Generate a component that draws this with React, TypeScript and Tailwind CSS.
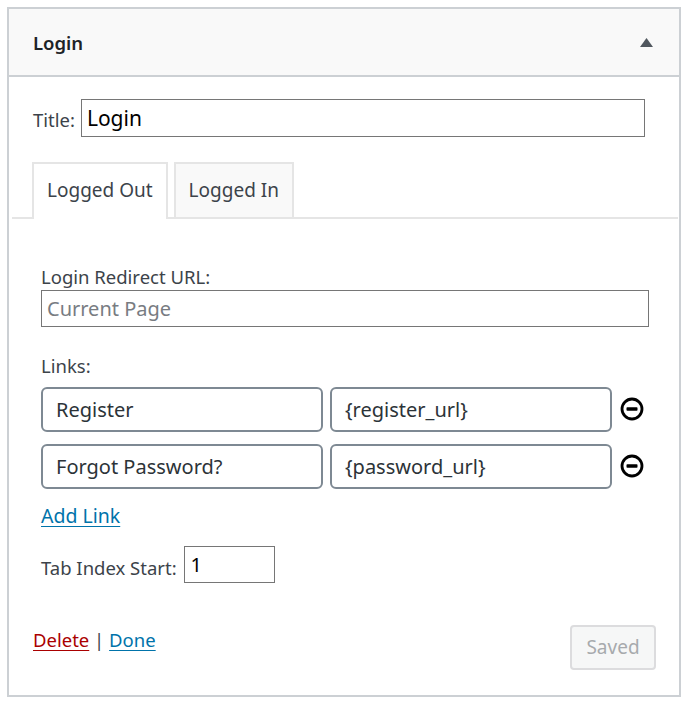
import React from "react";

function MinusCircle() {
  return (
    <svg width="24" height="24" viewBox="0 0 24 24" className="shrink-0">
      <circle cx="12" cy="12" r="10" fill="none" stroke="#000" strokeWidth="2.8" />
      <rect x="6.5" y="10.3" width="11" height="3.4" rx="0.8" fill="#000" />
    </svg>
  );
}

const linkInput =
  "h-[45px] w-[282px] rounded-[6px] border-2 border-[#7e8993] bg-white px-[13px] text-[20px] text-[#2c3338] outline-none";

export default function App() {
  const links = [
    { label: "Register", url: "{register_url}" },
    { label: "Forgot Password?", url: "{password_url}" },
  ];

  return (
    <div
      className="min-h-[705px] bg-white p-[7px] pb-[8px]"
      style={{ fontFamily: '"Noto Sans", "Open Sans", sans-serif' }}
    >
      <div className="flex h-[690px] w-[674px] flex-col border-2 border-[#ccd0d4] bg-white">
        {/* header */}
        <div className="flex h-[68px] items-center justify-between border-b-2 border-[#ccd0d4] bg-[#f9f9f9] pl-[24px] pr-[26px]">
          <h3 className="mt-[2px] text-[18.5px] font-semibold text-[#1d2327]">Login</h3>
          <svg width="13" height="9" viewBox="0 0 13 9">
            <polygon points="6.5,0 13,9 0,9" fill="#50575e" />
          </svg>
        </div>

        {/* title */}
        <div className="flex items-center pl-[24px] pr-[34px] pt-[22px]">
          <label className="mr-[6px] mt-[4px] text-[18.5px] text-[#3c434a]">Title:</label>
          <input
            readOnly
            value="Login"
            className="h-[38px] flex-1 border border-[#767676] px-[5px] text-[21px] text-black outline-none"
          />
        </div>

        {/* tabs */}
        <div className="ml-[3px] mr-[1px] mt-[25px] flex gap-[6px] border-b-2 border-[#e5e5e5] pl-[20px]">
          <div className="-mb-[2px] border-2 border-b-0 border-[#e5e5e5] bg-white px-[13px] pb-[14px] pt-[12px] text-[19px] text-[#3c434a]">
            Logged Out
          </div>
          <div className="border-2 border-b-0 border-[#e5e5e5] bg-[#f9f9f9] px-[13px] pb-[12px] pt-[12px] text-[19px] text-[#3c434a]">
            Logged In
          </div>
        </div>

        {/* panel */}
        <div className="flex flex-1 flex-col pl-[32px] pr-[30px] pt-[45px]">
          <label className="text-[18.5px] leading-[26px] text-[#3c434a]">Login Redirect URL:</label>
          <input
            readOnly
            placeholder="Current Page"
            className="h-[37px] w-full border border-[#767676] px-[5px] text-[20px] text-black outline-none placeholder:text-[#787c82]"
          />

          <label className="mt-[26px] text-[18.5px] leading-[26px] text-[#3c434a]">Links:</label>
          <div className="mt-[8px] flex flex-col gap-[12px]">
            {links.map((l) => (
              <div key={l.label} className="flex items-center gap-[7px]">
                <input readOnly value={l.label} className={linkInput} />
                <input readOnly value={l.url} className={linkInput} />
                <span className="ml-[1px]">
                  <MinusCircle />
                </span>
              </div>
            ))}
          </div>

          <a href="#" className="mt-[12px] self-start text-[19.5px] text-[#0073aa] underline underline-offset-[3px]">
            Add Link
          </a>

          <div className="mt-[16px] flex items-end">
            <label className="mb-[1px] mr-[7px] text-[18.5px] text-[#3c434a]">Tab Index Start:</label>
            <input
              readOnly
              value="1"
              className="h-[37px] w-[91px] border border-[#767676] px-[6px] text-[20px] text-black outline-none"
            />
          </div>
        </div>

        {/* footer */}
        <div className="flex items-start justify-between pb-[25px] pl-[24px] pr-[23px]">
          <div className="mt-[1px] text-[18.5px] text-[#3c434a]">
            <a href="#" className="text-[#a00] underline underline-offset-[3px]">
              Delete
            </a>{" "}
            |{" "}
            <a href="#" className="text-[#0073aa] underline underline-offset-[3px]">
              Done
            </a>
          </div>
          <button
            disabled
            className="h-[45px] w-[86px] rounded-[4px] border-2 border-[#dcdcde] bg-[#f6f7f7] text-[19px] text-[#a7aaad]"
          >
            Saved
          </button>
        </div>
      </div>
    </div>
  );
}
